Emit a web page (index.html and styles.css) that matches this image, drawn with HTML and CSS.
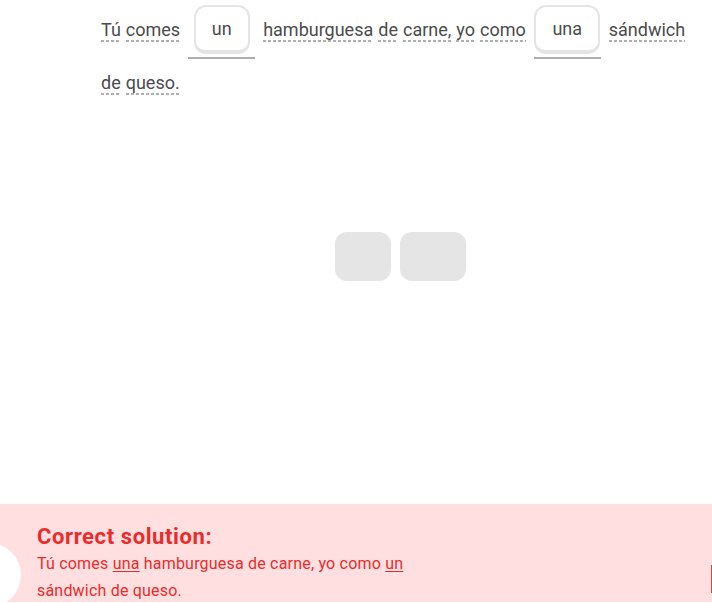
FILE: index.html
```html
<!DOCTYPE html>
<html lang="es">
<head>
<meta charset="utf-8">
<link rel="stylesheet" href="styles.css">
</head>
<body>
<div class="page">
  <main class="stage">
    <div class="sentence">
      <div class="row">
        <span class="word">Tú</span>
        <span class="word">comes</span>
        <span class="slot"><span class="chip">un</span></span>
        <span class="word">hamburguesa</span>
        <span class="word">de</span>
        <span class="word">carne,</span>
        <span class="word">yo</span>
        <span class="word">como</span>
        <span class="slot"><span class="chip">una</span></span>
        <span class="word">sándwich</span>
      </div>
      <div class="row">
        <span class="word">de</span>
        <span class="word">queso.</span>
      </div>
    </div>
    <div class="bank">
      <span class="ghost ghost-a"></span>
      <span class="ghost ghost-b"></span>
    </div>
  </main>
  <footer class="feedback">
    <span class="blob"></span>
    <div class="solution">
      <h2 class="sol-title">Correct solution:</h2>
      <p class="sol-text">Tú comes <u>una</u> hamburguesa de carne, yo como <u>un</u><br>sándwich de queso.</p>
    </div>
    <span class="edge"></span>
  </footer>
</div>
</body>
</html>
```
FILE: styles.css
```css
* { box-sizing: border-box; }
html, body { margin: 0; padding: 0; background: #fff; }
body { font-family: Roboto, "Noto Sans", sans-serif; color: #4b4b4b; overflow: hidden; }
.page { width: 712px; height: 603px; display: flex; flex-direction: column; position: relative; overflow: hidden; }
.stage { height: 504px; padding-top: 5px; }
.sentence { padding-left: 101px; display: flex; flex-direction: column; row-gap: 13px; }
.row { display: flex; align-items: flex-start; column-gap: 5px; }
.word {
  font-size: 18px;
  line-height: 22px;
  margin-top: 14px;
  padding-bottom: 1px;
  background-image: linear-gradient(to right, #afafaf 3px, transparent 3px);
  background-size: 5px 2px;
  background-repeat: repeat-x;
  background-position: 0 100%;
}
.row:nth-child(2) .word { margin-top: 0; }
.slot {
  min-width: 67px;
  height: 54px;
  margin: 0 3px;
  display: flex;
  flex-direction: column;
  align-items: center;
  border-bottom: 2px solid #afafaf;
}
.chip {
  height: 49px;
  min-width: 56px;
  padding: 0 16px;
  border: 2px solid #e5e5e5;
  border-bottom-width: 4px;
  border-radius: 12px;
  font-size: 18px;
  display: flex;
  align-items: center;
  justify-content: center;
  color: #4b4b4b;
}
.bank { margin-top: 137px; padding-left: 335px; display: flex; column-gap: 9px; }
.ghost { height: 49px; background: #e5e5e5; border-radius: 12px; }
.ghost-a { width: 56px; }
.ghost-b { width: 66px; }
.feedback {
  height: 98px;
  background: #ffdfe0;
  position: relative;
  padding: 19px 0 0 37px;
}
.blob {
  position: absolute;
  left: -43px;
  top: 39px;
  width: 64px;
  height: 64px;
  border-radius: 50%;
  background: #fff;
}
.edge { position: absolute; right: 0; top: 61px; width: 1px; height: 28px; background: #d9423f; }
.sol-title { margin: 0; font-size: 22px; line-height: 27px; font-weight: 700; letter-spacing: 0.6px; color: #ea2b2b; }
.sol-text { margin: 0; font-size: 16px; line-height: 27px; letter-spacing: 0.2px; color: #ea2b2b; }
.sol-text u { text-underline-offset: 2px; }
```
